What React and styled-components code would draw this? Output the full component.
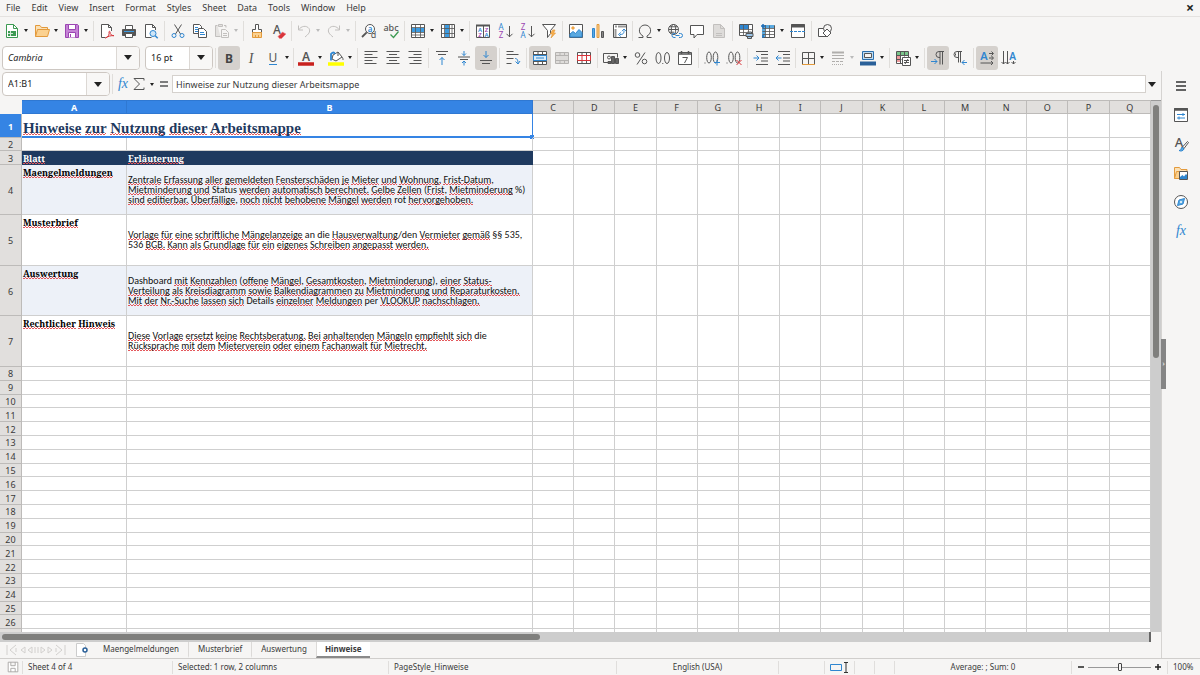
import React from "react";
import styled, { createGlobalStyle, css } from "styled-components";

const GlobalStyle = createGlobalStyle`
  *, *::before, *::after { box-sizing: border-box; }
  html, body { margin: 0; padding: 0; }
  body {
    font-family: "Noto Sans", sans-serif;
    font-size: 9px;
    line-height: 12px;
    color: #3a3a3a;
    background: #f6f5f4;
    overflow: hidden;
  }
  button, input { font: inherit; color: inherit; margin: 0; }
  button { padding: 0; border: 0; background: none; }
`;

const K = "#555";
const B = "#2f86d0";
const R = "#d8353b";
const G = "#3c9a52";
const P = "#9b45b2";
const O = "#e39a3c";
const D = "#c2c0be";

const T = ({ x, y, s = 10, c = K, w = 400, i, f, children }) => (
  <text x={x} y={y} fontSize={s} fill={c} stroke="none" fontWeight={w} fontStyle={i ? "italic" : "normal"} fontFamily={f || "Noto Sans, sans-serif"} textAnchor="middle">
    {children}
  </text>
);

const icons = {
  new: (
    <>
      <path d="M2.5 1.5h7l4 4v9h-11z" fill="#fff" stroke={G} />
      <path d="M9.5 1.5v4h4" stroke={G} />
      <path d="M4 8h8v5H4z" fill={G} stroke="none" />
      <path d="M4 10.5h5M6.5 8v5" stroke="#cfe9d5" />
    </>
  ),
  open: (
    <>
      <path d="M1.5 13.500V2.500h4.500l1.500 2h6v2.500" fill="#fbe0b4" stroke={O} />
      <path d="M1.500 13.500l2-7h12l-2 7z" fill="#fbd190" stroke={O} />
    </>
  ),
  save: (
    <>
      <path d="M1.500 1.500h12l1 1v12h-13z" fill="#c583d6" stroke={P} />
      <path d="M4.500 1.500h7v5h-7z" fill="#fff" stroke={P} />
      <path d="M4.500 14.500v-5h7v5" fill="#fff" stroke={P} />
      <path d="M6.500 11v3" stroke={P} />
    </>
  ),
  pdf: (
    <>
      <path d="M12.500 8V4.500l-3-3h-7v13h4" fill="#fff" />
      <path d="M9.500 1.500v3h3" />
      <path d="M6.500 15c3-1 4-3.500 3.500-6 0-1 1-1 1 0 0 2.500 1.500 3.500 4 3.700-3-.3-6 .5-8.500 2.300z" stroke={R} />
    </>
  ),
  print: (
    <>
      <path d="M4.500 6V2.500h7V6" fill="#fff" />
      <path d="M1.500 6.500h13v6h-13z" fill="#555" />
      <path d="M3 8.500h10" stroke="#3d9be0" />
      <path d="M4.500 10.500h7v4h-7z" fill="#fff" />
    </>
  ),
  preview: (
    <>
      <path d="M12.500 7V4.500l-3-3h-7v13h6" fill="#fff" />
      <path d="M9.500 1.500v3h3" />
      <circle cx="10" cy="10.500" r="3" fill="#cfe6f8" stroke={B} />
      <path d="M12.200 12.700l2.500 2.500" stroke={B} strokeWidth="1.500" />
    </>
  ),
  cut: (
    <>
      <path d="M4.500 1.500l6 9.500M11.500 1.500l-6 9.500" />
      <circle cx="4" cy="12.500" r="2" stroke={B} />
      <circle cx="12" cy="12.500" r="2" stroke={B} />
    </>
  ),
  copy: (
    <>
      <path d="M1.500 1.500h6l2 2v7h-8z" fill="#fff" />
      <path d="M3 4.500h3M3 6.500h3M3 8.500h3" stroke={B} />
      <path d="M6.500 5.500h5l3 3v6h-8z" fill="#fff" />
      <path d="M8 9.500h4M8 11.500h5" stroke={B} />
    </>
  ),
  paste: (
    <g stroke={D}>
      <path d="M6.500 13.500h-5v-11h2M10 2.500h2v2M4.500 1.500h4v2h-4z" fill="#e4e2e0" />
      <path d="M7.500 6.500h4l3 3v5h-7z" fill="#f6f5f4" />
      <path d="M9 10.500h4M9 12.500h4" />
    </g>
  ),
  clone: (
    <>
      <path d="M6.500 1.500h3v5h3v3h-9v-3h3z" fill="#fff" />
      <path d="M3.500 9.500h9v5h-9z" fill="#fbd190" stroke={O} />
      <path d="M6.500 12v2.500M9.500 12v2.500" stroke={O} />
    </>
  ),
  clear: (
    <>
      <T x={6} y={11} s={12} w={500}>A</T>
      <path d="M7 13.500l4.500-4.500 3.500 2-4.500 4.500h-2z" fill={R} stroke="#f0868a" strokeWidth=".6" />
    </>
  ),
  undo: <path d="M2.500 2.500v4.500h4.500M2.700 6.800C5 3 10.500 2 13 5.500c2 3.500-1 6-4 8.500" stroke={D} />,
  redo: <path d="M13.500 2.500v4.500H9M13.300 6.800C11 3 5.500 2 3 5.500c-2 3.500 1 6 4 8.500" stroke={D} />,
  find: (
    <>
      <circle cx="9" cy="6" r="4.500" fill="#fff" />
      <path d="M5.700 9.300L1 14" strokeWidth="1.800" />
      <T x={9} y={8.500} s={8} c={B} w={600}>a</T>
      <T x={12.500} y={15} s={9}>d</T>
    </>
  ),
  spell: (
    <>
      <T x={8} y={7.500} s={9} w={500}>abc</T>
      <path d="M7.500 11.500l3 3 5-6" stroke={G} strokeWidth="1.300" />
    </>
  ),
  row: (
    <>
      <path d="M1.500 1.500h13v13h-13z" fill="#fff" />
      <path d="M2 5h12v4H2z" fill="#3d9be0" stroke="none" />
      <path d="M1.500 4.500h13M1.500 9.500h13M1.500 12h13M5.500 1.500v13M10.500 1.500v13" strokeWidth=".8" />
    </>
  ),
  column: (
    <>
      <path d="M1.500 1.500h13v13h-13z" fill="#fff" />
      <path d="M5 2h4v12H5z" fill="#3d9be0" stroke="none" />
      <path d="M4.500 1.500v13M9.500 1.500v13M12 1.500v13M1.500 5.500h13M1.500 10.500h13" strokeWidth=".8" />
    </>
  ),
  sort: (
    <>
      <path d="M1.500 2.500h13v12h-13zM8.500 3v11" fill="#fff" />
      <path d="M1 2.500h14" strokeWidth="2" />
      <T x={5} y={8.800} s={6} c={B} w={600}>A</T>
      <T x={5} y={14} s={6} c={P} w={600}>Z</T>
      <T x={11.500} y={8.800} s={6} c={P} w={600}>Z</T>
      <T x={11.500} y={14} s={6} c={B} w={600}>A</T>
    </>
  ),
  az: (
    <>
      <T x={4} y={7} s={8} c={B}>A</T>
      <T x={4} y={15} s={8} c={P}>Z</T>
      <path d="M12.500 3v11M9.500 10.800l3 3 3-3" />
    </>
  ),
  za: (
    <>
      <T x={4} y={7} s={8} c={P}>Z</T>
      <T x={4} y={15} s={8} c={B}>A</T>
      <path d="M12.500 3v11M9.500 10.800l3 3 3-3" />
    </>
  ),
  filter: (
    <>
      <path d="M1.500 1.500h13l-5 6v3l-3 4v-7z" fill="#fff" />
      <path d="M11.500 7l-2 4h2l-1.500 4 4.500-5h-2l1.500-3z" fill="#fbb04c" stroke={O} strokeWidth=".7" />
    </>
  ),
  image: (
    <>
      <path d="M1.500 1.500h13v13h-13z" fill="#fff" />
      <circle cx="5" cy="5" r="1.300" fill="#fbb04c" stroke={O} strokeWidth=".7" />
      <path d="M2 14v-3l3-2.500 2.500 2 3.500-4 3 3V14z" fill="#5aa9e0" stroke={B} />
    </>
  ),
  chart: (
    <>
      <path d="M2.500 5.500h2v9h-2z" fill="#5aa9e0" stroke={B} />
      <path d="M7 1.500h2v13H7z" fill="#fbd190" stroke={O} />
      <path d="M11.500 8.500h2v6h-2z" fill="#888" />
    </>
  ),
  pivot: (
    <>
      <path d="M1.500 1.500h13v13h-13z" fill="#fff" />
      <path d="M3 3.500h2M6 3.500h8M3.500 6v8" strokeWidth="2" stroke="#999" />
      <path d="M8 11.500c4 0 4-2 4-4M6.500 11.500l2.300-2M6.500 11.500l2.300 2M12 6l-2 2.200M12 6l2 2.200" stroke={B} />
    </>
  ),
  omega: <path d="M1.500 14.500h4.500v-1.500c-6-3-4-11 2-11s8 8 2 11v1.500h4.500" />,
  link: (
    <>
      <circle cx="6.500" cy="6.500" r="5" fill="#fff" />
      <ellipse cx="6.500" cy="6.500" rx="2.200" ry="5" />
      <path d="M1.500 6.500h10M2.300 3.800h8.400M2.300 9.200h5" />
      <path d="M8.500 10.500h-1.500a2 2 0 000 4h1.500M12 10.500h1.500a2 2 0 010 4H12M8.500 12.500h4" stroke={B} fill="none" />
    </>
  ),
  comment: <path d="M1.500 2.500h13v9H8l-3 3.500v-3.500H1.500z" fill="#fff" />,
  header: (
    <g stroke={D}>
      <path d="M2.500 1.500h7l4 4v9h-11z" fill="#dedcda" />
      <path d="M9.500 1.500v4h4M5 10.500h6M5 12.500h6" />
    </g>
  ),
  printArea: (
    <>
      <path d="M1.500 1.500h13v11h-13z" fill="#fff" />
      <path d="M2 2h9v4H2z" fill="#2f86d0" stroke="none" />
      <path d="M1.500 6.500h13M1.500 9.500h13M5.500 1.500v11M10.500 1.500v11" strokeWidth=".8" />
      <path d="M8 10.500h7v3H8zM9.500 9h4v1.500M9.500 13.500h4v2h-4z" fill="#9cc5e8" />
    </>
  ),
  freeze: (
    <>
      <path d="M2.500 2.500h12v12h-12z" fill="#fff" />
      <path d="M2 2h12v3H2zM2 2h3v12H2z" fill="#5aa9e0" stroke="none" />
      <path d="M5.500 2v12.500M2.500 5.500h12M2.500 8.500h12M2.500 11.500h12M9.500 2.500v12" strokeWidth=".8" />
      <path d="M1 3h4M3 1v4M3 12v3" stroke="#1f6db5" strokeWidth="1.500" />
    </>
  ),
  split: (
    <>
      <path d="M1.500 1.500h13v13h-13z" fill="#fff" />
      <path d="M1 3h14" strokeWidth="3" />
      <path d="M0 8.500h16" stroke={B} strokeDasharray="3 1" />
    </>
  ),
  shapes: (
    <>
      <path d="M1.500 5.500h8v8h-8z" fill="#fff" />
      <circle cx="10.500" cy="5.500" r="4" fill="#f6f5f4" />
      <path d="M10 6l4 4-4 4-4-4z" fill="#fff" />
    </>
  ),
  bold: <T x={8} y={12.500} s={12} w={700} c="#444">B</T>,
  italic: <T x={8} y={12.500} s={14} i f="Liberation Serif, serif">I</T>,
  underline: (
    <>
      <T x={8} y={12} s={12}>U</T>
      <path d="M4 14.500h8" stroke={B} />
    </>
  ),
  fontColor: (
    <>
      <T x={8} y={10.500} s={12} w={600}>A</T>
      <path d="M0 14h16" stroke="#c9211e" strokeWidth="3.500" />
    </>
  ),
  highlight: (
    <>
      <path d="M5 5l5-3 4 5-6 4-4-2z" fill="#fff" />
      <path d="M3 3.500v7M3 4c2-2 3-2 4 0" stroke={B} strokeWidth="1.800" />
      <path d="M10 2v4M14 7c1 1 1 2 1 3" />
      <path d="M0 14h16" stroke="#ffff00" strokeWidth="3.500" />
    </>
  ),
  left: <path d="M1.500 1.500h13M1.500 4.500h8M1.500 7.500h13M1.500 10.500h8M1.500 13.500h12" />,
  center: <path d="M1.500 1.500h13M4 4.500h8M1.500 7.500h13M4 10.500h8M1.500 13.500h13" />,
  right: <path d="M1.500 1.500h13M6.500 4.500h8M1.500 7.500h13M6.500 10.500h8M2.500 13.500h12" />,
  top: (
    <>
      <path d="M2 1.500h12M4 4.500h8" />
      <path d="M8 15V7.500M5.500 10L8 7.500l2.500 2.500" stroke={B} />
    </>
  ),
  middle: (
    <>
      <path d="M2 7h12M4 9.500h8" />
      <path d="M8 1v4.500M6 3.500l2 2 2-2M8 15.500V11M6 13l2-2 2 2" stroke={B} />
    </>
  ),
  bottom: (
    <>
      <path d="M2 10.500h12M4 13.500h8" />
      <path d="M8 1v6.500M5.500 5L8 7.500 10.500 5" stroke={B} />
    </>
  ),
  wrap: (
    <>
      <path d="M1.500 1.500h7M1.500 4.500h12M1.500 8.500h7M1.500 13.500h5" />
      <path d="M10 8.500c2 0 3 1 3 5M10.500 11.500l2.500 2.500 2-3" stroke={B} />
    </>
  ),
  merge: (
    <>
      <path d="M1.500 1.500h13v13h-13z" fill="#fff" />
      <path d="M1.500 4.500h13M1.500 11.500h13M6 1.500v3M10.500 1.500v3M6 11.500v3M10.500 11.500v3" />
      <path d="M1.500 5.500h13v5h-13zM4 8h8" stroke={B} fill="#d8ebf9" />
    </>
  ),
  unmerge: (
    <g stroke="#b5b3b1">
      <path d="M1.500 2.500h13v11h-13z" fill="#dedcda" />
      <path d="M1.500 5.500h13M1.500 10.500h13M6 2.500v3M10.500 2.500v3M6 10.500v3M10.500 10.500v3" />
    </g>
  ),
  split2: (
    <>
      <path d="M1.500 2.500h13v11h-13z" fill="#fff" />
      <path d="M6 2.500v3M10.500 2.500v3M6 10.500v3M10.500 10.500v3" />
      <path d="M1.500 5.500h13v5h-13zM6 5.500v5M10.500 5.500v5" stroke={R} />
    </>
  ),
  currency: (
    <>
      <path d="M.5 12.500v-9h14v4M.5 12.500h6" fill="#f6f5f4" />
      <circle cx="6" cy="7.500" r="1.500" />
      <path d="M8.500 6.500h3v7h-3zM12.500 8.500h3v5h-3zM5 11.500h3v2H5z" fill="#666" />
    </>
  ),
  percent: (
    <>
      <circle cx="4.500" cy="5" r="2.300" />
      <circle cx="11.500" cy="11.500" r="2.300" />
      <path d="M12 2.500l-8 12" />
    </>
  ),
  number: (
    <>
      <ellipse cx="3.500" cy="8" rx="2.500" ry="5.500" />
      <ellipse cx="12" cy="8" rx="2.500" ry="5.500" />
      <path d="M7.300 13.500h1" />
    </>
  ),
  date: (
    <>
      <path d="M1.500 2.500h13v12h-13z" fill="#fff" />
      <path d="M1 4h14M4.500 1v3M11.500 1v3" strokeWidth="1.500" />
      <path d="M5.500 7.500h5l-3 5.500" />
    </>
  ),
  addDec: (
    <>
      <ellipse cx="5" cy="7.500" rx="2.300" ry="5.500" />
      <ellipse cx="11.500" cy="7.500" rx="2.300" ry="5.500" />
      <path d="M.5 13h1" />
      <path d="M13 9.500v6M10 12.500h6" stroke={B} />
    </>
  ),
  delDec: (
    <>
      <ellipse cx="5" cy="7.500" rx="2.300" ry="5.500" />
      <ellipse cx="11.500" cy="7.500" rx="2.300" ry="5.500" />
      <path d="M.5 13h1" />
      <path d="M10.500 10l5 5M15.500 10l-5 5" stroke={R} />
    </>
  ),
  indent: (
    <>
      <path d="M3 1.500h12M8 4.500h7M8 8h7M8 11h7M3 14.500h12" />
      <path d="M.5 8H6M3.500 5.500L6 8l-2.500 2.500" stroke={B} />
    </>
  ),
  outdent: (
    <>
      <path d="M3 1.500h12M8 4.500h7M8 8h7M8 11h7M3 14.500h12" />
      <path d="M6.500 8H1M3.500 5.500L1 8l2.500 2.500" stroke={B} />
    </>
  ),
  borders: (
    <>
      <path d="M2.500 14V2.500h12V14M8.500 2.500V14M2.500 8.500h12" fill="none" />
      <path d="M2 14.500h13" stroke={O} />
    </>
  ),
  lineStyle: (
    <g stroke="#b0aeac">
      <path d="M2 2.500h12" strokeWidth="2" />
      <path d="M2 5.500h12M2 8.500h12" />
      <path d="M2 11.500h12" strokeDasharray="3 1" />
      <path d="M2 14.500h12" strokeDasharray="1 1" />
    </g>
  ),
  borderColor: (
    <>
      <path d="M2.500 1.500h11v8h-11z" fill="#bcdcf5" stroke="#2a6fad" />
      <path d="M4.500 3.500h7v4h-7z" fill="#f6f5f4" />
      <path d="M0 13.500h16" stroke="#2a6099" strokeWidth="4" />
    </>
  ),
  conditional: (
    <>
      <path d="M1.500 1.500h12v12h-12z" fill="#fff" />
      <path d="M2 2h11v3H2z" fill="#79c48a" stroke="none" />
      <path d="M2 6h4v6H2z" fill="#ee9a9c" stroke="none" />
      <path d="M1.500 5.500h12M1.500 9.500h5M5.500 1.500v12M9.500 1.500v5" />
      <path d="M7.500 7.500h8v8h-8z" fill="#fff" />
      <path d="M9 10.500h5M9 12.500h5M13 9l-3 5" />
    </>
  ),
  ltr: (
    <>
      <path d="M14 1.500H9a3 3 0 000 6h1M10 1.500v13M12.500 1.500v13" />
      <path d="M1 11.500h6M4.500 9L7 11.500 4.500 14" stroke={B} />
    </>
  ),
  rtl: (
    <>
      <path d="M10 1.500H5a3 3 0 000 6h1M6.500 1.500v11M8.500 1.500v11M3.500 3.500v2" />
      <path d="M15 12.500h-5M12.500 10L10 12.500l2.500 2.500" stroke={B} />
    </>
  ),
  textLR: (
    <>
      <T x={5} y={10} s={11} c={B} w={600}>A</T>
      <path d="M10 3.500h4M12.500 1.500l2 2-2 2M10 8h4M12.500 6l2 2-2 2M1.500 13h12.500M12 11l2 2-2 2" />
    </>
  ),
  textTD: (
    <>
      <T x={11.500} y={10} s={10} c={B} w={600}>A</T>
      <path d="M2.500 1v13M.5 12l2 2 2-2M6.500 1v13M4.500 12l2 2 2-2M12.500 11v3M10.500 12l2 2 2-2" />
    </>
  ),
  fx: <T x={8} y={12} s={14} c={B} i f="Liberation Serif, serif">fx</T>,
  sum: <path d="M13 4.500v-2H3l5.500 5.500L3 13.500h10v-2" />,
  equals: <path d="M4 6h8M4 10h8" strokeWidth="1.500" />,
  menu: <path d="M3 4h10M3 8h10M3 12h10" stroke="#333" strokeWidth="1.500" />,
  properties: (
    <>
      <path d="M1.500 1.500h13v13h-13z" fill="#fff" />
      <path d="M1 2.500h14" strokeWidth="2.500" />
      <path d="M4 7.500h8M4 11h8M10 6v3M6 9.500v3" stroke={B} />
    </>
  ),
  styles: (
    <>
      <T x={6} y={11} s={13} w={500}>A</T>
      <path d="M14.500 5.500l1 1-4.500 6-1.500-1.500z" fill="#fff" />
      <path d="M9 11l2 2c-1 2-3 2.500-5 1.500 2 0 2-2 3-3.500z" fill="#5aa9e0" stroke={B} />
    </>
  ),
  gallery: (
    <>
      <path d="M1.500 13.500v-11h5l1.500 2h6v3" fill="#fbe0b4" stroke={O} />
      <path d="M1.500 13.500l2-7h3v7z" fill="#fbd190" stroke={O} />
      <path d="M6.500 6.500h8v8h-8z" fill="#fff" />
      <path d="M7 14v-2l2.500-2 1.500 1.500 2-2.500 1 1v4z" fill="#2f86d0" stroke="none" />
    </>
  ),
  navigator: (
    <>
      <circle cx="8" cy="8" r="6.500" fill="#fff" />
      <path d="M11.500 4.500l-1.500 5.500-5.500 1.500L6 6z" fill="#5aa9e0" stroke={B} />
      <circle cx="8" cy="8" r="1" fill="#fff" stroke="none" />
    </>
  ),
  docSave: (
    <g stroke="#a5a3a1">
      <path d="M2.500 2.500h11v11h-11zM5.500 2.500v4h5v-4M5.500 13.500v-4h5v4" fill="#fff" />
    </g>
  ),
};

const Svg = styled.svg`
  display: block;
  flex: none;
  fill: none;
  stroke: ${K};
  overflow: visible;
`;

const Icon = ({ name, size = 16 }) => (
  <Svg width={size} height={size} viewBox="0 0 16 16" aria-hidden="true">
    {icons[name]}
  </Svg>
);

const Caret = styled.span`
  flex: none;
  width: 0;
  height: 0;
  border: solid transparent;
  border-width: ${(p) => (p.$big ? "5px 4px 0" : "3px 2px 0")};
  border-top-color: ${(p) => (p.$off ? "#bbb" : "#222")};
`;

const Shell = styled.div`
  display: flex;
  flex-direction: column;
  height: 100vh;
  min-width: 0;
`;

const MenuBar = styled.nav`
  display: flex;
  align-items: center;
  height: 17px;
  flex: none;
  padding-left: 1px;
  border-bottom: 1px solid #e4e2e0;
`;

const MenuItem = styled.button`
  padding: 0 6px 0 5px;
`;

const CloseButton = styled.button`
  margin: 0 6px 0 auto;
  font-size: 14px;
  font-weight: 700;
  color: #222;
`;

const Toolbar = styled.div`
  display: flex;
  align-items: center;
  height: 27px;
  flex: none;
  padding-left: ${(p) => p.$pad || 1}px;
`;

const Tool = styled.button`
  display: flex;
  align-items: center;
  gap: 4px;
  flex: none;
  width: ${(p) => (p.$menu ? 30 : 22)}px;
  height: 24px;
  padding-left: 3px;
  border-radius: 3px;
  background: ${(p) => (p.$active ? "#d5d1cd" : "transparent")};
`;

const Sep = styled.span`
  flex: none;
  width: 1px;
  height: 20px;
  margin: 0 ${(p) => (p.$tight ? 1 : 2)}px;
  background: #e0dedb;
`;

const Combo = styled.div`
  display: flex;
  flex: none;
  width: ${(p) => p.$width}px;
  height: 24px;
  margin-right: ${(p) => p.$gap || 0}px;
  border: 1px solid #cdc7c2;
  border-radius: 4px;
  background: #fff;
  overflow: hidden;
`;

const ComboInput = styled.input`
  flex: 1;
  min-width: 0;
  padding: 0 5px;
  border: 0;
  background: none;
  color: #222;
  font-style: ${(p) => (p.$italic ? "italic" : "normal")};
`;

const ComboButton = styled.button`
  display: flex;
  align-items: center;
  justify-content: center;
  width: 23px;
  border-left: 1px solid #dcd8d4;
  background: #f8f7f6;
`;

const Body = styled.div`
  display: flex;
  flex: 1;
  min-height: 0;
`;

const Main = styled.main`
  display: flex;
  flex-direction: column;
  flex: 1;
  min-width: 0;
`;

const FormulaBar = styled.div`
  display: flex;
  align-items: center;
  flex: none;
  height: 29px;
  padding: 0 5px 3px 2px;
`;

const FormulaInput = styled.input`
  flex: 1;
  min-width: 0;
  height: 18px;
  padding: 0 3px;
  margin-right: 2px;
  border: 1px solid #d5d1cd;
  background: #fff;
`;

const FormulaTool = styled.button`
  display: flex;
  align-items: center;
  gap: 3px;
  width: ${(p) => (p.$menu ? 25 : 16)}px;
  height: 20px;
`;

const SheetRow = styled.div`
  display: flex;
  flex: 1;
  min-height: 0;
`;

const GridPane = styled.div`
  flex: 1;
  min-width: 0;
  overflow: hidden;
  background: #fff;
`;

const Table = styled.table`
  width: 100%;
  height: calc(100% + 11px);
  table-layout: fixed;
  border-collapse: separate;
  border-spacing: 0;
`;

const Col = styled.col`
  width: ${(p) => p.$width}px;
`;

const headCell = css`
  padding: 0;
  font-weight: ${(p) => (p.$selected ? 700 : 400)};
  color: ${(p) => (p.$selected ? "#fff" : "#3a3a3a")};
  background: ${(p) => (p.$selected ? "#3584e4" : "#e1dfdd")};
  border-right: 1px solid #bdbbb9;
  border-bottom: 1px solid #bdbbb9;
  text-align: center;
  line-height: 11px;
`;

const ColHead = styled.th`
  ${headCell}
  height: 14px;
  border-top: 1px solid #bdbbb9;
  ${(p) => p.$selected && "border-color: #2f78d2;"}
`;

const Corner = styled.td`
  padding: 0;
  background: #f6f5f4;
`;

const RowHead = styled.th`
  ${headCell}
  padding-top: 1px;
`;

const Row = styled.tr`
  height: ${(p) => (p.$height ? `${p.$height}px` : "auto")};
`;

const Cell = styled.td`
  position: relative;
  padding: 0;
  border-right: 1px solid #cfcfcf;
  border-bottom: 1px solid #cfcfcf;
  background: ${(p) => p.$fill || "transparent"};
`;

const TitleCell = styled(Cell)`
  padding-left: 1px;
  font: 700 15px/17px "Liberation Serif", serif;
  color: #1f3a5f;
  vertical-align: bottom;
  white-space: nowrap;
`;

const HeaderCell = styled(Cell)`
  padding-left: 1px;
  border-color: #1f3a5f;
  font: 700 9px/11px "Noto Serif", "Liberation Serif", serif;
  color: #fff;
  vertical-align: bottom;
`;

const LabelCell = styled(Cell)`
  padding: 2px 0 0 1px;
  font: 700 9px/12px "Noto Serif", "Liberation Serif", serif;
  color: #000;
  vertical-align: top;
  white-space: nowrap;
`;

const NoteCell = styled(Cell)`
  padding-left: 1px;
  font: 400 10px/10px Carlito, Lato, sans-serif;
  color: #111;
  white-space: nowrap;
`;

const Line = styled.div``;

const Misspelled = styled.span`
  background-image:
    linear-gradient(90deg, #e4585c 2px, transparent 2px),
    linear-gradient(90deg, transparent 2px, #e4585c 2px);
  background-size: 3px 1px;
  background-repeat: repeat-x;
  background-position: 0 calc(100% - 1px), 0 calc(100% - 2px);
`;

const Selection = styled.span`
  position: absolute;
  inset: 0 -1px -1px 0;
  border: solid #3584e4;
  border-width: 0 1px 2px 0;
  &::after {
    content: "";
    position: absolute;
    right: -2px;
    bottom: -3px;
    width: 4px;
    height: 4px;
    background: #3584e4;
  }
`;

const VScroll = styled.div`
  flex: none;
  width: 10px;
  padding: 4px 2px 0;
  background: #cdcdcd;
  border-top: 1px solid #999;
`;

const HScroll = styled.div`
  flex: none;
  height: 10px;
  margin-right: 10px;
  padding: 2px;
  background: #cdcdcd;
  border-right: 2px solid #666;
`;

const Thumb = styled.div`
  width: ${(p) => p.$w || "100%"};
  height: ${(p) => p.$h || "100%"};
  border-radius: 3px;
  background: #7f7f7d;
`;

const TabBar = styled.div`
  display: flex;
  flex: none;
  height: 16px;
  align-items: stretch;
  font-size: 8px;
`;

const TabNav = styled.div`
  display: flex;
  align-items: center;
  width: 93px;
  padding-left: 6px;
  gap: 10px;
`;

const SheetTab = styled.button`
  padding: 0 9px 0 ${(p) => (p.$active ? 8 : 9)}px;
  border-left: 1px solid ${(p) => (p.$first ? "transparent" : "#dcdad8")};
  border-bottom: 2px solid ${(p) => (p.$active ? "#8a8a8a" : "transparent")};
  background: ${(p) => (p.$active ? "#fff" : "transparent")};
  font-weight: ${(p) => (p.$active ? 700 : 400)};
`;

const Sidebar = styled.aside`
  display: flex;
  flex-direction: column;
  align-items: center;
  position: relative;
  flex: none;
  width: 39px;
  border-left: 1px solid #d5d3d1;
`;

const SideButton = styled.button`
  display: flex;
  align-items: center;
  justify-content: center;
  width: 29px;
  height: 29px;
`;

const Handle = styled.button`
  position: absolute;
  left: -1px;
  top: 268px;
  width: 5px;
  height: 50px;
  background: #858585;
  color: #fff;
  font-size: 7px;
  line-height: 50px;
`;

const StatusBar = styled.footer`
  display: flex;
  align-items: center;
  flex: none;
  height: 17px;
  border-top: 1px solid #d0cecc;
  background: #f6f5f4;
  font-size: 8px;
`;

const StatusCell = styled.div`
  display: flex;
  align-items: center;
  justify-content: ${(p) => (p.$center ? "center" : "flex-start")};
  flex: ${(p) => (p.$fixed ? "0 0" : "1 1")} ${(p) => p.$width}px;
  min-width: 0;
  height: 13px;
  padding: 0 5px;
  gap: 3px;
  border-left: 1px solid ${(p) => (p.$first ? "transparent" : "#e0dedc")};
  white-space: nowrap;
`;

const ZoomButton = styled.button`
  display: flex;
`;

const ZoomRange = styled.input`
  appearance: none;
  flex: 1;
  min-width: 0;
  height: 8px;
  background: linear-gradient(#999, #999) center / 100% 1px no-repeat;
  &::-webkit-slider-thumb {
    appearance: none;
    width: 4px;
    height: 8px;
    border: 1px solid #444;
    border-radius: 1px;
    background: #f6f5f4;
  }
`;

const standard = [
  ["new", 1], ["open", 1], ["save", 1], "|", ["pdf"], ["print"], ["preview"], "|",
  ["cut"], ["copy"], ["paste", 2], "|", ["clone"], ["clear"], ".", ["undo", 2], ["redo", 2], "|",
  ["find"], ["spell"], "|", ["row", 1], ["column", 1], "|", ["sort"], ["az"], ["za"], ["filter"], "|",
  ["image"], ["chart"], ["pivot"], ".", ["omega", 1], ["link"], ["comment"], ["header"], "|",
  ["printArea"], ["freeze", 1], ["split"], "|", ["shapes"],
];

const formatting = [
  ["bold", 0, 1], ["italic"], ["underline", 1], ".", ["fontColor", 1], ["highlight", 1], "|",
  ["left"], ["center"], ["right"], "|", ["top"], ["middle"], ["bottom", 0, 1], "|", ["wrap"], "|",
  ["merge", 0, 1], ["unmerge"], ["split2"], "|", ["currency", 1], ["percent"], ["number"], ["date"], "|",
  ["addDec"], ["delDec"], "|", ["indent"], ["outdent"], ".", ["borders", 1], ["lineStyle", 2], ["borderColor", 1], "|",
  ["conditional", 1], "|", ["ltr", 0, 1], ["rtl"], "|", ["textLR", 0, 1], ["textTD"],
];

const Tools = ({ items }) =>
  items.map((t, i) =>
    typeof t === "string" ? (
      <Sep key={i} $tight={t === "."} />
    ) : (
      <Tool key={i} type="button" aria-label={t[0]} $menu={!!t[1]} $active={!!t[2]}>
        <Icon name={t[0]} />
        {t[1] ? <Caret $off={t[1] === 2} /> : null}
      </Tool>
    )
  );

const ComboBox = ({ label, value, width, gap, italic }) => (
  <Combo $width={width} $gap={gap}>
    <ComboInput aria-label={label} defaultValue={value} $italic={italic} />
    <ComboButton type="button" aria-label={`${label} list`}>
      <Caret $big />
    </ComboButton>
  </Combo>
);

// Text in braces is known to the dictionary; every other word gets a spelling wave.
const Spelled = ({ text }) =>
  text.split(/(\{[^}]*\}|\s+)/).map((part, i) => {
    if (!part) return null;
    if (part[0] === "{") return part.slice(1, -1);
    if (!part.trim()) return part;
    return <Misspelled key={i}>{part}</Misspelled>;
  });

const notes = [
  {
    label: "Maengelmeldungen",
    height: 50,
    lines: [
      "Zentrale Erfassung aller gemeldeten Fensterschäden je Mieter und Wohnung. Frist-Datum{,}",
      "Mietminderung und {Status} werden automatisch berechnet. Gelbe Zellen {(}Frist{,} Mietminderung {%)}",
      "sind editierbar. Überfällige{,} noch nicht behobene Mängel werden {rot} hervorgehoben.",
    ],
  },
  {
    label: "Musterbrief",
    height: 51,
    lines: [
      "Vorlage für eine schriftliche Mängelanzeige {an die} Hausverwaltung{/den} Vermieter gemäß {§§ 535,}",
      "{536} BGB. Kann als Grundlage für ein eigenes Schreiben angepasst werden.",
    ],
  },
  {
    label: "Auswertung",
    height: 50,
    lines: [
      "{Dashboard} mit Kennzahlen {(}offene Mängel{,} Gesamtkosten{,} Mietminderung{),} einer Status-",
      "Verteilung als Kreisdiagramm sowie Balkendiagrammen zu Mietminderung und Reparaturkosten.",
      "Mit der Nr.-Suche lassen sich {Details} einzelner Meldungen {per} VLOOKUP nachschlagen.",
    ],
  },
  {
    label: "Rechtlicher Hinweis",
    height: 51,
    lines: [
      "Diese Vorlage ersetzt keine Rechtsberatung. Bei anhaltenden Mängeln empfiehlt sich {die}",
      "Rücksprache mit dem Mieterverein oder einem Fachanwalt für Mietrecht.",
    ],
  },
];

const letters = "CDEFGHIJKLMNOPQ".split("");
const Blank = () => letters.map((l) => <Cell key={l} />);

const Sheet = () => (
  <Table>
    <colgroup>
      <Col $width={22} />
      <Col $width={105} />
      <Col $width={406} />
      {letters.map((l) => <col key={l} />)}
    </colgroup>
    <thead>
      <Row $height={14}>
        <Corner />
        <ColHead $selected>A</ColHead>
        <ColHead $selected>B</ColHead>
        {letters.map((l) => <ColHead key={l}>{l}</ColHead>)}
      </Row>
    </thead>
    <tbody>
      <Row $height={24}>
        <RowHead $selected>1</RowHead>
        <TitleCell colSpan={2}>
          <Spelled text="Hinweise zur Nutzung dieser Arbeitsmappe" />
          <Selection />
        </TitleCell>
        <Blank />
      </Row>
      <Row $height={13}>
        <RowHead>2</RowHead>
        <Cell />
        <Cell />
        <Blank />
      </Row>
      <Row $height={14}>
        <RowHead>3</RowHead>
        <HeaderCell $fill="#1f3a5f"><Spelled text="Blatt" /></HeaderCell>
        <HeaderCell $fill="#1f3a5f"><Spelled text="Erläuterung" /></HeaderCell>
        <Blank />
      </Row>
      {notes.map((n, i) => (
        <Row key={n.label} $height={n.height}>
          <RowHead>{i + 4}</RowHead>
          <LabelCell $fill={i % 2 ? "" : "#edf1f8"}><Spelled text={n.label} /></LabelCell>
          <NoteCell $fill={i % 2 ? "" : "#edf1f8"}>
            {n.lines.map((l) => <Line key={l}><Spelled text={l} /></Line>)}
          </NoteCell>
          <Blank />
        </Row>
      ))}
      {Array.from({ length: 20 }, (_, i) => (
        <Row key={i}>
          <RowHead>{i < 19 ? i + 8 : "\u00a0"}</RowHead>
          <Cell />
          <Cell />
          <Blank />
        </Row>
      ))}
    </tbody>
  </Table>
);

const menus = ["File", "Edit", "View", "Insert", "Format", "Styles", "Sheet", "Data", "Tools", "Window", "Help"];
const panels = ["menu", "properties", "styles", "gallery", "navigator", "fx"];
const tabs = ["Maengelmeldungen", "Musterbrief", "Auswertung", "Hinweise"];

export default function App() {
  return (
    <Shell>
      <GlobalStyle />
      <MenuBar>
        {menus.map((m) => <MenuItem key={m} type="button">{m}</MenuItem>)}
        <CloseButton type="button" aria-label="Close document">×</CloseButton>
      </MenuBar>
      <Toolbar>
        <Tools items={standard} />
      </Toolbar>
      <Toolbar $pad={2}>
        <ComboBox label="Font name" value="Cambria" width={138} gap={5} italic />
        <ComboBox label="Font size" value="16 pt" width={68} />
        <Sep />
        <Tools items={formatting} />
      </Toolbar>
      <Body>
        <Main>
          <FormulaBar>
            <ComboBox label="Name box" value="A1:B1" width={108} />
            <Sep />
            <FormulaTool type="button" aria-label="Function wizard"><Icon name="fx" /></FormulaTool>
            <FormulaTool type="button" aria-label="Select function" $menu>
              <Icon name="sum" />
              <Caret />
            </FormulaTool>
            <FormulaTool type="button" aria-label="Formula"><Icon name="equals" /></FormulaTool>
            <FormulaInput aria-label="Input line" defaultValue="Hinweise zur Nutzung dieser Arbeitsmappe" />
            <Caret $big />
          </FormulaBar>
          <SheetRow>
            <GridPane><Sheet /></GridPane>
            <VScroll><Thumb $h="48%" /></VScroll>
          </SheetRow>
          <HScroll><Thumb $w="47%" /></HScroll>
          <TabBar>
            <TabNav>
              <Svg width="60" height="12" viewBox="0 0 60 12" aria-hidden="true">
                <path d="M1 1v10M10 1L4 6l6 5M10 4v4M19 3l-4 3 4 3zM26 3l-4 3 4 3zM35 3l4 3-4 3zM42 3l4 3-4 3zM50 1l6 5-6 5M50 4v4M59 1v10M29 3v6M32 3v6" stroke="#d2d0ce" />
              </Svg>
              <Svg width="14" height="14" viewBox="0 0 14 14" aria-hidden="true">
                <path d="M.5.5h7l2 2v11h-9z" fill="#fff" stroke="#ccc" />
                <circle cx="9" cy="7" r="2" fill="#fff" stroke="#2a6099" strokeWidth="1.500" />
              </Svg>
            </TabNav>
            {tabs.map((t, i) => (
              <SheetTab key={t} type="button" $first={i === 0} $active={i === 3}>{t}</SheetTab>
            ))}
          </TabBar>
        </Main>
        <Sidebar>
          {panels.map((p) => (
            <SideButton key={p} type="button" aria-label={p}><Icon name={p} /></SideButton>
          ))}
          <Handle type="button" aria-label="Hide sidebar">›</Handle>
        </Sidebar>
      </Body>
      <StatusBar>
        <StatusCell $first $fixed $width={22}><Icon name="docSave" size={14} /></StatusCell>
        <StatusCell $width={150}>Sheet 4 of 4</StatusCell>
        <StatusCell $width={216}>Selected: 1 row, 2 columns</StatusCell>
        <StatusCell $width={228}>PageStyle_Hinweise</StatusCell>
        <StatusCell $width={162} $center>English (USA)</StatusCell>
        <StatusCell $width={46} />
        <StatusCell $fixed $width={30}>
          <Svg width="18" height="12" viewBox="0 0 18 12" aria-hidden="true">
            <path d="M.5 3.500h11v6H.5z" stroke={B} />
            <path d="M14 1.500h4M16 1.500v10M14 11.500h4" stroke="#333" />
          </Svg>
        </StatusCell>
        <StatusCell $fixed $width={20} />
        <StatusCell $fixed $width={20} />
        <StatusCell $width={177} $center>Average: ; Sum: 0</StatusCell>
        <StatusCell $fixed $width={96}>
          <ZoomButton type="button" aria-label="Zoom out">
            <Svg width="8" height="8" viewBox="0 0 8 8"><path d="M1 4h6" stroke="#222" strokeWidth="1.500" /></Svg>
          </ZoomButton>
          <ZoomRange type="range" aria-label="Zoom" defaultValue="50" />
          <ZoomButton type="button" aria-label="Zoom in">
            <Svg width="8" height="8" viewBox="0 0 8 8"><path d="M1 4h6M4 1v6" stroke="#222" strokeWidth="1.500" /></Svg>
          </ZoomButton>
        </StatusCell>
        <StatusCell $fixed $width={33}>100%</StatusCell>
      </StatusBar>
    </Shell>
  );
}
